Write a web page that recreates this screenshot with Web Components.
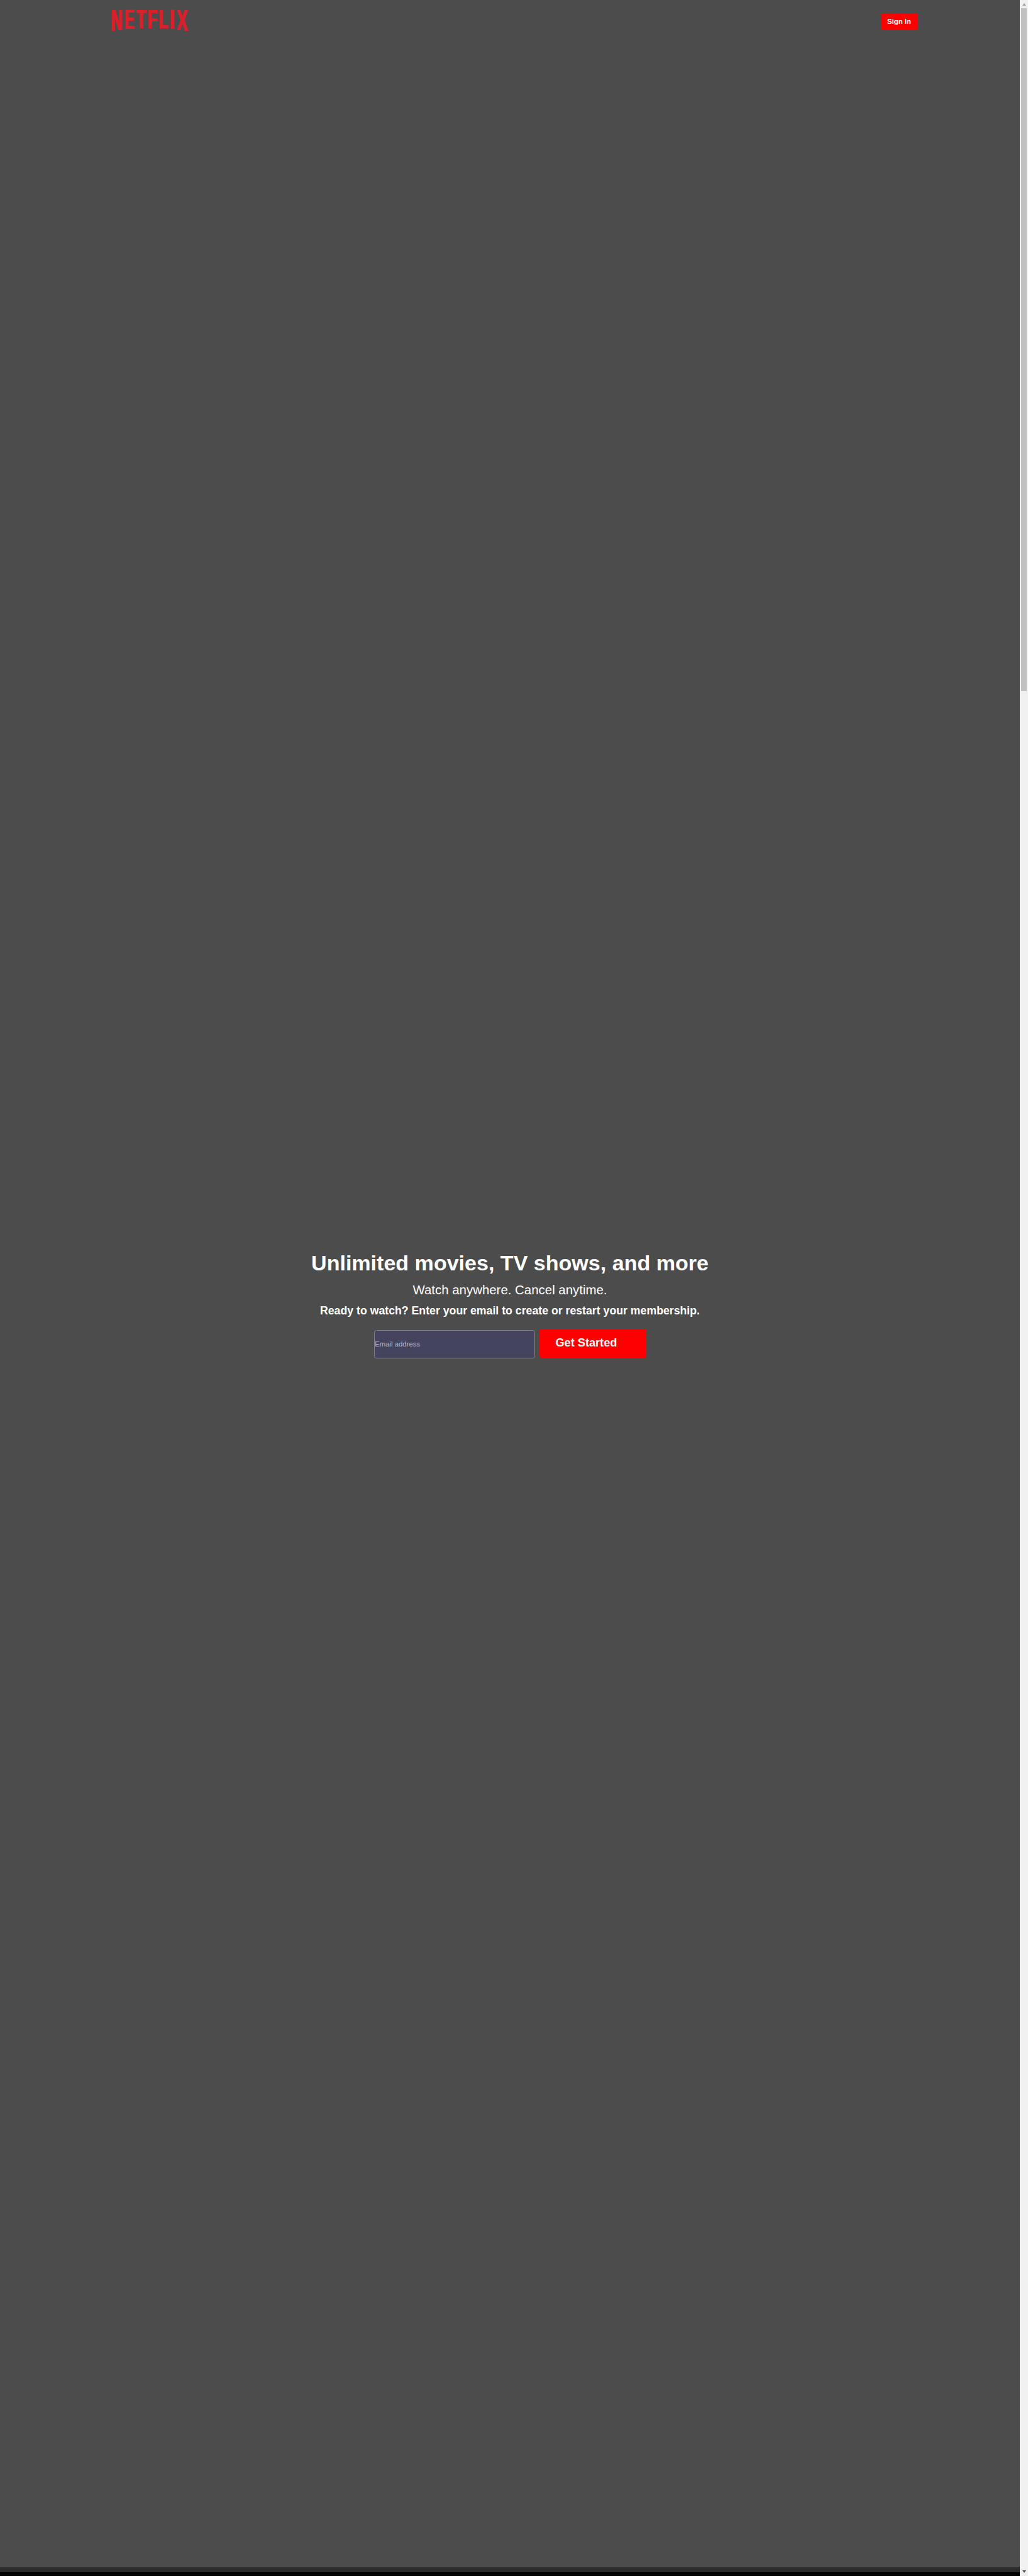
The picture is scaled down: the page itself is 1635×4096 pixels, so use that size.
<!DOCTYPE html>
<html lang="en">
<head>
<meta charset="utf-8">
<title>Netflix</title>
<style>
/* 1rem = 100 design units */
html { font-size: 85.15px; }
body { margin: 0; height: 4096px; overflow: hidden; background: #000; font-family: "Liberation Sans", Arial, sans-serif; color: #fff; }
</style>
</head>
<body>
<landing-page></landing-page>
<script>
const define = (name, html) => customElements.define(name, class extends HTMLElement {
  constructor() { super(); this.attachShadow({ mode: 'open' }).innerHTML = html; }
});

// [letter, ink start, ink end (font units), left, right, bottom]
const letters = [
  ['N', 137, 1342, 0, 19.4, 38.9], ['E', 137, 1274, 25.3, 42.4, 35.8],
  ['T', 42, 1208, 45.7, 64.8, 34.4], ['F', 137, 1168, 68.3, 85.4, 33.8],
  ['L', 137, 1188, 89, 105.8, 34.5], ['I', 137, 432, 110.3, 116.4, 35.4],
  ['X', 28, 1338, 121, 142.7, 38.9]
];
const grow = 2;
const wordmark = letters.map(([c, a, b, l, r, h]) => {
  const sx = (r - l - grow) / ((b - a) / 100), sy = h / 14.09;
  return `<text transform="matrix(${sx.toFixed(4)} 0 0 ${sy.toFixed(4)} ${(l - a / 100 * sx).toFixed(3)} ${h})">${c}</text>`;
}).join('');

define('brand-logo', `<style>
  :host { display: block; width: 1.43rem; height: .39rem; }
  svg { display: block; width: 100%; height: 100%; overflow: visible; }
  text { font: bold 20.48px "Liberation Sans", Arial, sans-serif; fill: #db202c; }
  g { filter: drop-shadow(${grow}px 0 0 #db202c); }
</style><svg viewBox="0 0 143 39" role="img" aria-label="NETFLIX">
<clipPath id="arc"><path d="M-1-1H144V39.5Q71.5 29.5-1 39.5Z"/></clipPath>
<g clip-path="url(#arc)">${wordmark}</g></svg>`);

define('red-button', `<style>
  :host { display: flex; box-sizing: border-box; align-items: center; background: #f00; border-radius: .04rem; font-weight: bold; white-space: nowrap; }
</style><slot></slot>`);

define('site-header', `<style>
  :host { display: flex; justify-content: space-between; align-items: flex-start; padding: .184rem 1.9rem 0 2.096rem; }
  red-button { width: .7rem; height: .3rem; margin-top: .066rem; padding-left: .122rem; font-size: .1333rem; }
</style><brand-logo></brand-logo><red-button>Sign In</red-button>`);

define('email-field', `<style>
  :host { display: block; width: 3rem; height: .53rem; }
  input { display: block; box-sizing: border-box; width: 100%; height: 100%; margin: 0; padding: 0; border: 1px solid #808080; border-radius: .04rem; background: #45445f; color: #fff; font: .1333rem "Liberation Sans", Arial, sans-serif; outline: 0; }
  input::placeholder { color: #b9b8c2; opacity: 1; }
</style><input type="email" placeholder="Email address">`);

define('hero-banner', `<style>
  :host { display: flex; flex-direction: column; align-items: center; padding-top: 22.784rem; }
  h1, h2, h3 { margin: 0; white-space: nowrap; }
  h1 { font-size: .4rem; line-height: .46rem; }
  h2 { font-size: .24rem; line-height: .28rem; font-weight: normal; margin-top: .135rem; }
  h3 { font-size: .208rem; line-height: .24rem; margin-top: .125rem; }
  form { display: flex; align-items: flex-start; gap: .083rem; margin: .217rem 0 0 .014rem; }
  email-field { margin-top: .02rem; }
  red-button { width: 2rem; height: .54rem; padding: 0 0 .022rem .303rem; font-size: .2133rem; }
</style>
<h1>Unlimited movies, TV shows, and more</h1>
<h2>Watch anywhere. Cancel anytime.</h2>
<h3>Ready to watch? Enter your email to create or restart your membership.</h3>
<form><email-field></email-field><red-button>Get Started</red-button></form>`);

define('scroll-rail', `<style>
  :host { display: flex; flex-direction: column; align-items: center; justify-content: space-between; box-sizing: border-box; width: 13px; background: #f0f0f0; padding: 5px 0; }
  .top { display: flex; flex-direction: column; align-items: center; gap: 4px; }
  .thumb { width: 9px; height: 1086px; background: #c1c1c1; }
  svg { display: block; width: 6px; height: 4px; }
</style><div class="top"><svg viewBox="0 0 6 4"><path d="M3 0 6 4H0Z" fill="#a2a2a2"/></svg><div class="thumb"></div></div>
<svg viewBox="0 0 6 4"><path d="M0 0H6L3 4Z" fill="#505050"/></svg>`);

define('landing-page', `<style>
  :host { display: flex; height: 4096px; }
  main { flex: 1; display: flex; flex-direction: column; min-width: 0; }
  .screen { flex: 1; background: #4c4c4c; }
  .divider { height: 8px; background: #2d2d2d; }
  .next { height: 6px; background: #000; }
</style><main><div class="screen"><site-header></site-header><hero-banner></hero-banner></div><div class="divider"></div><div class="next"></div></main><scroll-rail></scroll-rail>`);
</script>
</body>
</html>
